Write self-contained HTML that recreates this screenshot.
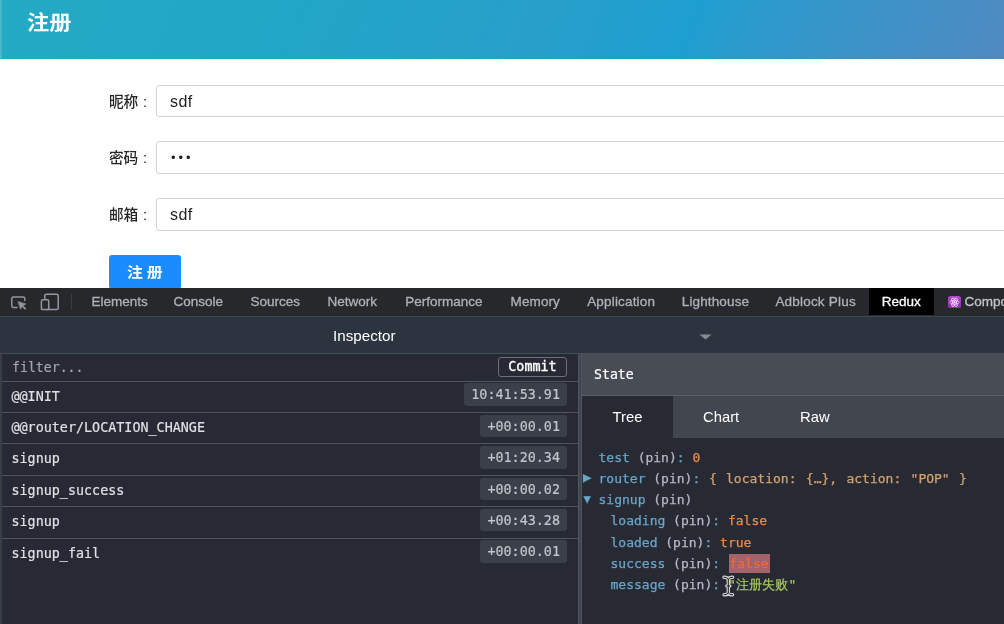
<!DOCTYPE html>
<html lang="zh">
<head>
<meta charset="utf-8">
<title>注册</title>
<style>
*{box-sizing:border-box;margin:0;padding:0}
html,body{width:1004px;height:624px;overflow:hidden;background:#fff}
body{position:relative;will-change:transform;font-family:"Liberation Sans","Noto Sans CJK SC",sans-serif;font-size:14px;color:#222}
.abs{position:absolute}
#hdr{left:0;top:0;width:1004px;height:59px;background:linear-gradient(115deg,#23aac3 0%,#22a6c7 30%,#289fcb 54%,#1d9fd0 68%,#2a9bcd 73%,#3c93c8 85%,#4f8ac1 100%)}
#hdr h1{position:absolute;left:27px;top:9.2px;font-size:20.2px;line-height:28px;font-weight:bold;color:#fff;transform:scaleX(1.1);transform-origin:0 50%}
#hdr:before{content:"";position:absolute;left:0;top:0;width:2px;height:59px;background:rgba(255,255,255,.16)}
.lbl{position:absolute;left:50px;width:97px;margin-top:0.9px;text-align:right;font-size:14.7px;line-height:32px;color:#262626;font-weight:500;white-space:nowrap}
.lbl i{font-style:normal;margin-left:4.6px}
.inp{position:absolute;left:156px;width:860px;height:32.3px;letter-spacing:.4px;border:1px solid #d4d4d4;border-radius:3px;background:#fff;padding-left:13px;font-size:16px;line-height:31px;color:#1f1f1f}
#btn{left:109px;top:255px;width:72px;height:34px;background:#1a8cff;border-radius:3px;color:#fff;font-size:14.2px;line-height:34px;text-align:center;font-weight:700}
#btn span{display:inline-block;transform:scaleX(1.12);word-spacing:-0.5px}
/* devtools */
#tabs{left:0;top:288px;width:1004px;height:28px;background:#27282b}
#tabs span{position:absolute;top:0;line-height:27px;font-size:13.5px;color:#aeb2b8;white-space:nowrap;-webkit-text-stroke-width:.3px}
#tabs .sel{background:#000;color:#fff;height:27px;text-align:center}
#insp{left:0;top:315.5px;width:1004px;height:38px;background:#2c343f;border-top:1.5px solid #3e4651;border-bottom:1.5px solid #464d57}
#insp .t{position:absolute;left:333px;top:0;line-height:38px;font-size:15.2px;color:#fff}
#left{-webkit-text-stroke-width:.2px;left:0;top:353.5px;width:578px;height:271px;background:#272a35;font-family:"DejaVu Sans Mono","Liberation Mono",monospace;font-size:13.4px}
.row{position:absolute;left:0;width:578px;height:32px;border-top:1.5px solid #4f545e;color:#dfe0e3}
.row .n{position:absolute;left:11.5px;top:0;line-height:30px;white-space:nowrap}
.row .tm{position:absolute;right:11px;top:1.9px;height:22.5px;line-height:24.3px;padding:0 7px;background:#3a3f49;border-radius:3px;color:#c2c5cb}
#split{left:577.8px;top:353.5px;width:4.4px;height:271px;background:linear-gradient(90deg,#4f545d 0,#4f545d 35%,#40454e 38%,#40454e 64%,#4f545d 67%)}
#right{left:582px;top:353.5px;width:423px;height:271px;background:#272a33}
#state{-webkit-text-stroke-width:.2px;left:0;top:0;width:423px;height:42px;background:#474c55;border-bottom:1.5px solid #5a5f68;color:#fff;font-family:"DejaVu Sans Mono",monospace;font-size:13.2px;line-height:41px;padding-left:12px}
#rtabs{left:0;top:42px;width:423px;height:42.3px;background:#42474f}
#rtabs span{position:absolute;top:0;height:42.3px;line-height:42.6px;font-size:14.8px;color:#fff}
#rtabs .sel{left:0;width:91px;background:#272a33;text-align:center}
#tree{-webkit-text-stroke-width:.25px;left:0;top:85px;width:423px;height:186px;font-family:"DejaVu Sans Mono",monospace;font-size:13px;color:#b7b9c6}
#tree div{position:absolute;white-space:pre;line-height:21px}
.k{color:#69a6c9}.v{color:#ef8a4c}.s{color:#a4c462}.o{color:#d3a271;word-spacing:1.5px;margin-left:0.8px}
.ar{position:absolute;top:0;font-weight:normal;color:#69a6c9;font-size:12px}
</style>
</head>
<body>
<div id="hdr" class="abs"><h1>注册</h1></div>

<div class="lbl" style="top:85px">昵称<i>:</i></div>
<div class="inp" style="top:84.8px">sdf</div>
<div class="lbl" style="top:141.6px">密码<i>:</i></div>
<div class="inp" style="top:141.4px;letter-spacing:2.9px;font-size:13px;padding-left:14px">•••</div>
<div class="lbl" style="top:198.6px">邮箱<i>:</i></div>
<div class="inp" style="top:198.4px">sdf</div>
<div id="btn" class="abs"><span>注 册</span></div>

<div id="tabs" class="abs">
  <svg class="abs" style="left:10px;top:6.6px" width="18" height="17" viewBox="0 0 18 17" fill="none" stroke="#92979d" stroke-width="1.5" stroke-linejoin="round" stroke-linecap="round"><path d="M7 12.5H3.3a1.5 1.5 0 0 1-1.5-1.5V3.5A1.5 1.5 0 0 1 3.3 2h10a1.5 1.5 0 0 1 1.5 1.5V5.6"/><path d="M8 6.8l2.600 7.400 1.400-2.800 3.100 3.100 0.900-0.900-3.100-3.100 2.800-1.400z" fill="#92979d" stroke-width="0.6"/></svg>
  <svg class="abs" style="left:39px;top:4px" width="22" height="20" viewBox="0 0 22 20" fill="none" stroke="#92979d" stroke-width="1.5"><rect x="5.800" y="2.200" width="13.400" height="15.400" rx="1.600"/><rect x="2.400" y="7.800" width="7.300" height="9.800" rx="1.200" fill="#27282b"/></svg>
  <div class="abs" style="left:70.500px;top:6px;width:1px;height:16px;background:#3a3d42"></div>
  <span style="left:91.500px">Elements</span>
  <span style="left:173.500px">Console</span>
  <span style="left:250.500px">Sources</span>
  <span style="left:327.6px">Network</span>
  <span style="left:405.2px">Performance</span>
  <span style="left:510.6px;letter-spacing:.1px">Memory</span>
  <span style="left:587.2px;letter-spacing:.17px">Application</span>
  <span style="left:681.8px;letter-spacing:.13px">Lighthouse</span>
  <span style="left:775.4px;letter-spacing:.2px">Adblock Plus</span>
  <span class="sel" style="left:868.500px;width:65.500px">Redux</span>
  <svg class="abs" style="left:947.6px;top:7.7px" width="13" height="12.6" viewBox="0 0 13 12" preserveAspectRatio="none"><defs><linearGradient id="pg" x1="0" y1="0" x2="0" y2="1"><stop offset="0" stop-color="#b548d2"/><stop offset="1" stop-color="#8f27ad"/></linearGradient></defs><rect width="13" height="12" rx="2.500" fill="url(#pg)"/><g fill="none" stroke="#f3d9fa" stroke-width="0.800"><ellipse cx="6.500" cy="6" rx="4.600" ry="1.800"/><ellipse cx="6.500" cy="6" rx="4.600" ry="1.800" transform="rotate(60 6.500 6)"/><ellipse cx="6.500" cy="6" rx="4.600" ry="1.800" transform="rotate(120 6.500 6)"/></g><circle cx="6.500" cy="6" r="1" fill="#fff"/></svg>
  <span style="left:964.500px;color:#c0c3c8">Components</span>
</div>

<div id="insp" class="abs"><span class="t">Inspector</span>
  <svg class="abs" style="left:699px;top:17px" width="13" height="6" viewBox="0 0 13 6"><path d="M0.500 0.500h12L6.500 5.500z" fill="#878c95"/></svg>
</div>

<div id="left" class="abs">
  <div class="abs" style="left:12px;top:0;line-height:27px;color:#a2a6ae;font-size:13.200px">filter...</div>
  <div class="abs" style="left:498px;top:3.500px;width:69px;height:20px;border:1px solid #6d6f7d;border-radius:3px;color:#fff;text-align:center;line-height:18px;-webkit-text-stroke-width:.4px">Commit</div>
  <div class="row" style="top:27px"><span class="n">@@INIT</span><span class="tm">10:41:53.91</span></div>
  <div class="row" style="top:58.4px"><span class="n">@@router/LOCATION_CHANGE</span><span class="tm">+00:00.01</span></div>
  <div class="row" style="top:89.8px"><span class="n">signup</span><span class="tm">+01:20.34</span></div>
  <div class="row" style="top:121.2px"><span class="n">signup_success</span><span class="tm">+00:00.02</span></div>
  <div class="row" style="top:152.6px"><span class="n">signup</span><span class="tm">+00:43.28</span></div>
  <div class="row" style="top:184px"><span class="n">signup_fail</span><span class="tm">+00:00.01</span></div>
  <div class="abs" style="left:0;top:0;width:1.5px;height:271px;background:#393d47"></div>
</div>
<div id="split" class="abs"></div>
<div id="right" class="abs">
  <div id="state" class="abs">State</div>
  <div id="rtabs" class="abs">
    <span class="sel">Tree</span>
    <span style="left:121px">Chart</span>
    <span style="left:218px">Raw</span>
  </div>
  <div id="tree" class="abs">
    <div style="left:16.5px;top:8.2px"><span class="k">test</span> (pin)<span class="k">:</span> <span class="v">0</span></div>
    <div style="left:16.5px;top:29.3px"><b class="ar" style="left:-15.5px;font-size:14px;top:-0.5px">▶</b><span class="k">router</span> (pin)<span class="k">:</span> <span class="o">{ location: {…}, action: "POP" }</span></div>
    <div style="left:16.5px;top:50.2px"><b class="ar" style="left:-15px;font-size:12px;top:0.5px">▼</b><span class="k">signup</span> (pin)</div>
    <div style="left:28.5px;top:71.5px"><span class="k">loading</span> (pin)<span class="k">:</span> <span class="v">false</span></div>
    <div style="left:28.5px;top:93px"><span class="k">loaded</span> (pin)<span class="k">:</span> <span class="v">true</span></div>
    <div style="left:28.5px;top:114px"><span class="k">success</span> (pin)<span class="k">:</span> <span class="v" style="background:#a4626a;color:#f06c34;padding:1.8px 1px 2.4px 0.5px;margin-left:1px">false</span></div>
    <div style="left:28.5px;top:135.3px"><span class="k">message</span> (pin)<span class="k">:</span> <span class="s">"<span style="font-size:13.2px;margin:0 .4px">注册失败</span>"</span></div>
    <svg class="abs" style="left:140.3px;top:136px" width="13" height="22" viewBox="0 0 13 22" fill="none" stroke-linecap="round" stroke-linejoin="round"><path d="M2 2.200Q5 2 6.300 4.200Q7.600 2 10.600 2.200M6.300 4.200V17.800M2 19.800Q5 20 6.300 17.800Q7.600 20 10.600 19.800M4.800 11h3" stroke="#d2d2d6" stroke-width="3.400"/><path d="M2 2.200Q5 2 6.300 4.200Q7.600 2 10.600 2.200M6.300 4.200V17.800M2 19.800Q5 20 6.300 17.800Q7.600 20 10.600 19.800M5 11h2.600" stroke="#1c1c20" stroke-width="1"/></svg>
  </div>
</div>
</body>
</html>
